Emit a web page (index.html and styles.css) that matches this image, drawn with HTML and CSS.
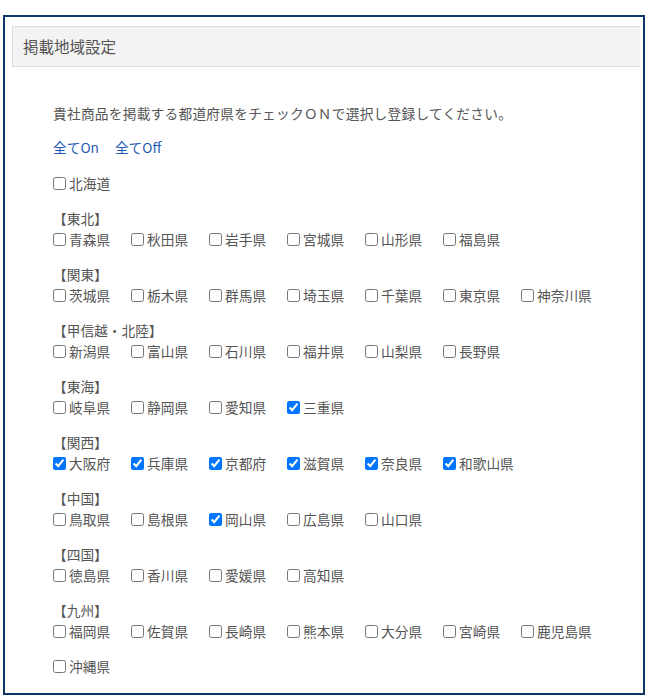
FILE: index.html
```html
<!DOCTYPE html>
<html lang="ja">
<head>
<meta charset="utf-8">
<link rel="stylesheet" href="styles.css">
</head>
<body>
<div class="panel">
  <div class="panel-head">掲載地域設定</div>
  <div class="panel-body">
    <p class="desc">貴社商品を掲載する都道府県をチェックＯＮで選択し登録してください。</p>
    <div class="links"><a href="#">全てOn</a><a href="#">全てOff</a></div>
    <div class="row single"><label class="item"><input type="checkbox">北海道</label></div>

    <div class="group">
      <div class="group-name">【東北】</div>
      <div class="row">
        <label class="item"><input type="checkbox">青森県</label>
        <label class="item"><input type="checkbox">秋田県</label>
        <label class="item"><input type="checkbox">岩手県</label>
        <label class="item"><input type="checkbox">宮城県</label>
        <label class="item"><input type="checkbox">山形県</label>
        <label class="item"><input type="checkbox">福島県</label>
      </div>
    </div>

    <div class="group">
      <div class="group-name">【関東】</div>
      <div class="row">
        <label class="item"><input type="checkbox">茨城県</label>
        <label class="item"><input type="checkbox">栃木県</label>
        <label class="item"><input type="checkbox">群馬県</label>
        <label class="item"><input type="checkbox">埼玉県</label>
        <label class="item"><input type="checkbox">千葉県</label>
        <label class="item"><input type="checkbox">東京県</label>
        <label class="item"><input type="checkbox">神奈川県</label>
      </div>
    </div>

    <div class="group">
      <div class="group-name">【甲信越・北陸】</div>
      <div class="row">
        <label class="item"><input type="checkbox">新潟県</label>
        <label class="item"><input type="checkbox">富山県</label>
        <label class="item"><input type="checkbox">石川県</label>
        <label class="item"><input type="checkbox">福井県</label>
        <label class="item"><input type="checkbox">山梨県</label>
        <label class="item"><input type="checkbox">長野県</label>
      </div>
    </div>

    <div class="group">
      <div class="group-name">【東海】</div>
      <div class="row">
        <label class="item"><input type="checkbox">岐阜県</label>
        <label class="item"><input type="checkbox">静岡県</label>
        <label class="item"><input type="checkbox">愛知県</label>
        <label class="item"><input type="checkbox" checked>三重県</label>
      </div>
    </div>

    <div class="group">
      <div class="group-name">【関西】</div>
      <div class="row">
        <label class="item"><input type="checkbox" checked>大阪府</label>
        <label class="item"><input type="checkbox" checked>兵庫県</label>
        <label class="item"><input type="checkbox" checked>京都府</label>
        <label class="item"><input type="checkbox" checked>滋賀県</label>
        <label class="item"><input type="checkbox" checked>奈良県</label>
        <label class="item"><input type="checkbox" checked>和歌山県</label>
      </div>
    </div>

    <div class="group">
      <div class="group-name">【中国】</div>
      <div class="row">
        <label class="item"><input type="checkbox">鳥取県</label>
        <label class="item"><input type="checkbox">島根県</label>
        <label class="item"><input type="checkbox" checked>岡山県</label>
        <label class="item"><input type="checkbox">広島県</label>
        <label class="item"><input type="checkbox">山口県</label>
      </div>
    </div>

    <div class="group">
      <div class="group-name">【四国】</div>
      <div class="row">
        <label class="item"><input type="checkbox">徳島県</label>
        <label class="item"><input type="checkbox">香川県</label>
        <label class="item"><input type="checkbox">愛媛県</label>
        <label class="item"><input type="checkbox">高知県</label>
      </div>
    </div>

    <div class="group">
      <div class="group-name">【九州】</div>
      <div class="row">
        <label class="item"><input type="checkbox">福岡県</label>
        <label class="item"><input type="checkbox">佐賀県</label>
        <label class="item"><input type="checkbox">長崎県</label>
        <label class="item"><input type="checkbox">熊本県</label>
        <label class="item"><input type="checkbox">大分県</label>
        <label class="item"><input type="checkbox">宮崎県</label>
        <label class="item"><input type="checkbox">鹿児島県</label>
      </div>
    </div>

    <div class="row single last"><label class="item"><input type="checkbox">沖縄県</label></div>
  </div>
</div>
</body>
</html>
```
FILE: styles.css
```css
html, body {
  margin: 0;
  padding: 0;
  background: #fff;
}
body {
  font-family: "Noto Sans CJK JP", "Noto Sans", sans-serif;
  color: #555;
}
.panel {
  margin: 15px 0 0 3px;
  width: 638px;
  height: 676px;
  border: 2px solid #0d3866;
  box-sizing: content-box;
}
.panel-head {
  margin: 9px 3px 0 7px;
  height: 39px;
  line-height: 39px;
  padding-left: 10px;
  background: #f3f3f3;
  border: 1px solid #dedede;
  border-right: none;
  font-size: 15.5px;
  color: #555;
}
.panel-body {
  padding: 36px 0 0 48px;
  font-size: 13.7px;
}
.desc {
  margin: 0;
  line-height: 21px;
  height: 21px;
  letter-spacing: 0.25px;
}
.links {
  margin-top: 13px;
  line-height: 21px;
  height: 21px;
  display: flex;
  gap: 16px;
}
.links a {
  color: #1f5bb5;
  text-decoration: none;
}
.row {
  display: flex;
  line-height: 21px;
  height: 21px;
}
.row.single {
  margin-top: 15px;
}
.row.last {
  margin-top: 14px;
}
.group {
  margin-top: 14px;
}
.group-name {
  line-height: 21px;
  height: 21px;
}
.item {
  width: 78px;
  flex: 0 0 78px;
  display: flex;
  align-items: center;
  white-space: nowrap;
}
.item input {
  width: 13px;
  height: 13px;
  margin: 0 3px 0 0;
}
```
